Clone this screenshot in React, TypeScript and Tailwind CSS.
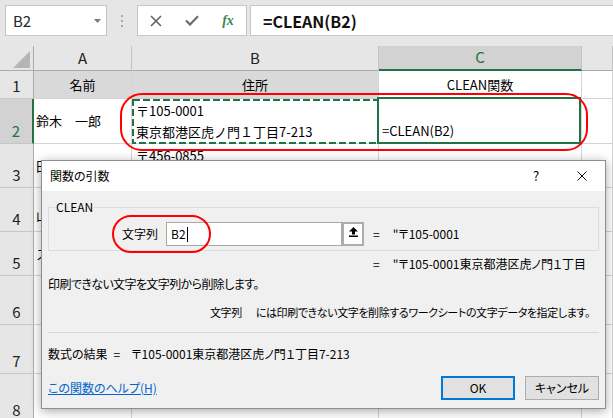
import React from "react";

function ColHead({ label }: { label?: string }) {
  return (
    <div className="flex items-center justify-center border-r border-b border-r-[#c3c3c3] border-b-[#ababab] bg-[#e6e6e6] text-[15px] text-[#222]">
      {label}
    </div>
  );
}

function RowHead({ n, selected }: { n: number; selected?: boolean }) {
  if (selected)
    return (
      <div className="flex items-end justify-center border-r-2 border-b border-r-[#217346] border-b-[#c6c6c6] bg-[#d2d2d2] pb-[2px] text-[15px] leading-[20px] text-[#217346]">
        {n}
      </div>
    );
  return (
    <div className="flex items-end justify-center border-r border-b border-r-[#ababab] border-b-[#c6c6c6] bg-[#e6e6e6] pb-[2px] text-[15px] leading-[20px] text-[#222]">
      {n}
    </div>
  );
}

function Cell({ children, className }: { children?: React.ReactNode; className: string }) {
  return (
    <div className={"flex min-w-0 overflow-hidden whitespace-nowrap border-r border-b border-[#d4d4d4] text-[13px] text-black " + className}>
      {children}
    </div>
  );
}

export default function App() {
  return (
    <div className="relative h-[418px] w-[613px] overflow-hidden bg-[#e6e6e6] text-black [font-family:'Noto_Sans_CJK_JP','Noto_Sans',sans-serif]">
      {/* Formula bar */}
      <div className="flex h-[46px] items-start pl-[5px] pt-[5px]">
        <div className="flex h-[31px] w-[102px] items-center justify-between border border-[#c6c6c6] bg-white pl-[7px] pr-[5px]">
          <span className="text-[15px] leading-none text-[#262626]">B2</span>
          <svg width="7" height="4" viewBox="0 0 7 4">
            <path d="M0 0H7L3.5 4Z" fill="#7b7b7b" />
          </svg>
        </div>
        <div className="flex h-[31px] w-[30px] flex-col items-center justify-center gap-[3px]">
          <div className="h-[2px] w-[2px] bg-[#a8a8a8]" />
          <div className="h-[2px] w-[2px] bg-[#a8a8a8]" />
          <div className="h-[2px] w-[2px] bg-[#a8a8a8]" />
        </div>
        <div className="flex h-[31px] w-[110px] border border-[#c6c6c6] bg-white">
          <div className="flex w-[36px] items-center justify-center">
            <svg width="12" height="12" viewBox="0 0 12 12">
              <path d="M1 1L11 11M11 1L1 11" stroke="#636363" strokeWidth="1.6" />
            </svg>
          </div>
          <div className="flex w-[36px] items-center justify-center">
            <svg width="14" height="11" viewBox="0 0 14 11">
              <path d="M1 5.5L5 9.5L13 1.2" stroke="#6b6b6b" strokeWidth="2.2" fill="none" />
            </svg>
          </div>
          <div className="flex w-[36px] items-center justify-center">
            <span className="text-[14px] font-bold italic leading-none text-[#3c8a4f] [font-family:'Liberation_Serif',serif]">fx</span>
          </div>
        </div>
        <div className="ml-[3px] flex h-[31px] flex-1 items-center border border-r-0 border-[#c6c6c6] bg-white pl-[12px] text-[16px] font-bold text-[#111]">
          =CLEAN(B2)
        </div>
      </div>

      {/* Grid */}
      <div className="grid grid-cols-[34px_98px_247px_203px_1fr] grid-rows-[25px_28px_45px_44px_44px_44px_49px_49px_49px]">
        {/* header */}
        <div className="flex items-end justify-end border-r border-b border-r-[#ababab] border-b-[#ababab] bg-[#e6e6e6] pb-[2px] pr-[3px]">
          <svg width="17" height="17" viewBox="0 0 17 17">
            <path d="M17 0V17H0Z" fill="#b5b5b5" />
          </svg>
        </div>
        <ColHead label="A" />
        <ColHead label="B" />
        <div className="flex items-center justify-center border-r border-b-2 border-r-[#c3c3c3] border-b-[#217346] bg-[#d2d2d2] text-[15px] text-[#217346]">
          C
        </div>
        <ColHead />

        {/* row 1 */}
        <RowHead n={1} />
        <Cell className="items-center justify-center bg-[#d9d9d9]">名前</Cell>
        <Cell className="items-center justify-center bg-[#d9d9d9]">住所</Cell>
        <Cell className="items-center justify-center bg-white">CLEAN関数</Cell>
        <Cell className="bg-white" />

        {/* row 2 */}
        <RowHead n={2} selected />
        <Cell className="items-center bg-white pl-[2px]">鈴木　一郎</Cell>
        <Cell className="flex-col justify-center bg-white pl-[4px] leading-[21px]">
          <div>〒105-0001</div>
          <div>東京都港区虎ノ門１丁目7-213</div>
        </Cell>
        <Cell className="items-end bg-white pb-[2px] pl-[3px] leading-[21px]">=CLEAN(B2)</Cell>
        <Cell className="bg-white" />

        {/* row 3 */}
        <RowHead n={3} />
        <Cell className="items-center bg-white pl-[2px]">
          <span className="block w-[6px] overflow-hidden">田</span>
        </Cell>
        <Cell className="flex-col justify-start bg-white pl-[4px] pt-[1px] leading-[21px]">
          <div>〒456-0855</div>
        </Cell>
        <Cell className="bg-white" />
        <Cell className="bg-white" />

        {/* row 4 */}
        <RowHead n={4} />
        <Cell className="items-center bg-white pl-[2px] pt-[10px]">
          <span className="block w-[6px] overflow-hidden">山</span>
        </Cell>
        <Cell className="bg-white" />
        <Cell className="bg-white" />
        <Cell className="bg-white" />

        {/* row 5 */}
        <RowHead n={5} />
        <Cell className="items-center bg-white pl-[2px]">
          <span className="block w-[6px] overflow-hidden">ス</span>
        </Cell>
        <Cell className="bg-white" />
        <Cell className="bg-white" />
        <Cell className="bg-white" />

        {/* rows 6-8 */}
        <RowHead n={6} />
        <Cell className="bg-white" />
        <Cell className="bg-white" />
        <Cell className="bg-white" />
        <Cell className="bg-white" />
        <RowHead n={7} />
        <Cell className="bg-white" />
        <Cell className="bg-white" />
        <Cell className="bg-white" />
        <Cell className="bg-white" />
        <RowHead n={8} />
        <Cell className="bg-white" />
        <Cell className="bg-white" />
        <Cell className="bg-white" />
        <Cell className="bg-white" />
      </div>

      {/* marching ants on B2 */}
      <svg className="absolute left-[132px] top-[99px]" width="247" height="45" viewBox="0 0 247 45">
        <rect x="1" y="1" width="245" height="43" fill="none" stroke="#217346" strokeWidth="2" strokeDasharray="7 3" />
      </svg>
      {/* C2 selection */}
      <div className="absolute left-[377px] top-[97px] h-[47px] w-[204px] border-2 border-[#217346]" />
      {/* red annotation */}
      <div className="absolute left-[120px] top-[93px] h-[58px] w-[468px] rounded-[22px] border-2 border-[#ff0000]" />

      {/* Dialog */}
      <div className="absolute left-[41px] top-[160px] flex h-[249px] w-[565px] flex-col border border-[#8e8e8e] bg-[#f0f0f0] text-[12px] leading-[18px] shadow-[0_2px_10px_rgba(0,0,0,0.35)] [font-feature-settings:'palt']">
        <div className="flex h-[30px] shrink-0 items-center bg-white pl-[8px]">
          <span>関数の引数</span>
          <div className="ml-auto flex h-full w-[46px] items-center justify-center text-[13px]">?</div>
          <div className="flex h-full w-[46px] items-center justify-center">
            <svg width="10" height="10" viewBox="0 0 10 10">
              <path d="M0.5 0.5L9.5 9.5M9.5 0.5L0.5 9.5" stroke="#111" strokeWidth="1" />
            </svg>
          </div>
        </div>
        <div className="flex flex-1 flex-col px-[6px]">
          <div className="relative mt-[16px] flex h-[44px] shrink-0 items-start border border-[#dcdcdc] pt-[14px]">
            <span className="absolute left-[6px] top-[-10px] bg-[#f0f0f0] px-[1px]">CLEAN</span>
            <div className="w-[109px] text-right leading-[24px]">文字列</div>
            <div className="ml-[8px] flex h-[24px] w-[176px] items-center border border-[#a9a9a9] bg-white pl-[4px]">
              <span>B2</span>
              <span className="ml-[1px] h-[15px] w-px bg-black" />
            </div>
            <div className="flex h-[24px] w-[22px] items-start justify-center border-2 border-[#adadad] bg-white pt-[3px]">
              <svg width="9" height="10" viewBox="0 0 9 10">
                <path d="M4.5 0L9 4.5H6V7.5H3V4.5H0Z" fill="#000" />
                <rect x="0" y="8.5" width="9" height="1.5" fill="#000" />
              </svg>
            </div>
            <span className="ml-[9px] leading-[24px]">=</span>
            <span className="ml-[13px] leading-[24px]">"〒105-0001</span>
          </div>
          <div className="mt-[4px] whitespace-nowrap pl-[325px]">
            =<span className="ml-[13px]">"〒105-0001東京都港区虎ノ門１丁目</span>
          </div>
          <div className="mt-[2px] whitespace-nowrap tracking-[-0.6px]">印刷できない文字を文字列から削除します。</div>
          <div className="mt-[10px] whitespace-nowrap pl-[162px] text-[11px] tracking-[-0.4px]">
            <span>文字列</span>
            <span className="ml-[14px]">には印刷できない文字を削除するワークシートの文字データを指定します。</span>
          </div>
          <div className="mt-[11px] h-px shrink-0 bg-[#d9d9d9]" />
          <div className="mt-[12px] whitespace-nowrap">
            数式の結果<span className="ml-[6px]">=</span>
            <span className="ml-[11px]">〒105-0001東京都港区虎ノ門１丁目7-213</span>
          </div>
          <div className="mt-[13px] flex items-center">
            <span className="text-[#0066cc] underline">この関数のヘルプ(H)</span>
            <div className="ml-auto flex h-[24px] w-[74px] items-center justify-center border-2 border-[#0078d7] bg-[#e1e1e1]">OK</div>
            <div className="ml-[10px] flex h-[24px] w-[74px] items-center justify-center border border-[#adadad] bg-[#e1e1e1]">キャンセル</div>
          </div>
        </div>
        {/* red annotation inside dialog */}
        <div className="absolute left-[70px] top-[54px] h-[38px] w-[99px] rounded-[19px] border-2 border-[#ff0000]" />
      </div>
    </div>
  );
}
